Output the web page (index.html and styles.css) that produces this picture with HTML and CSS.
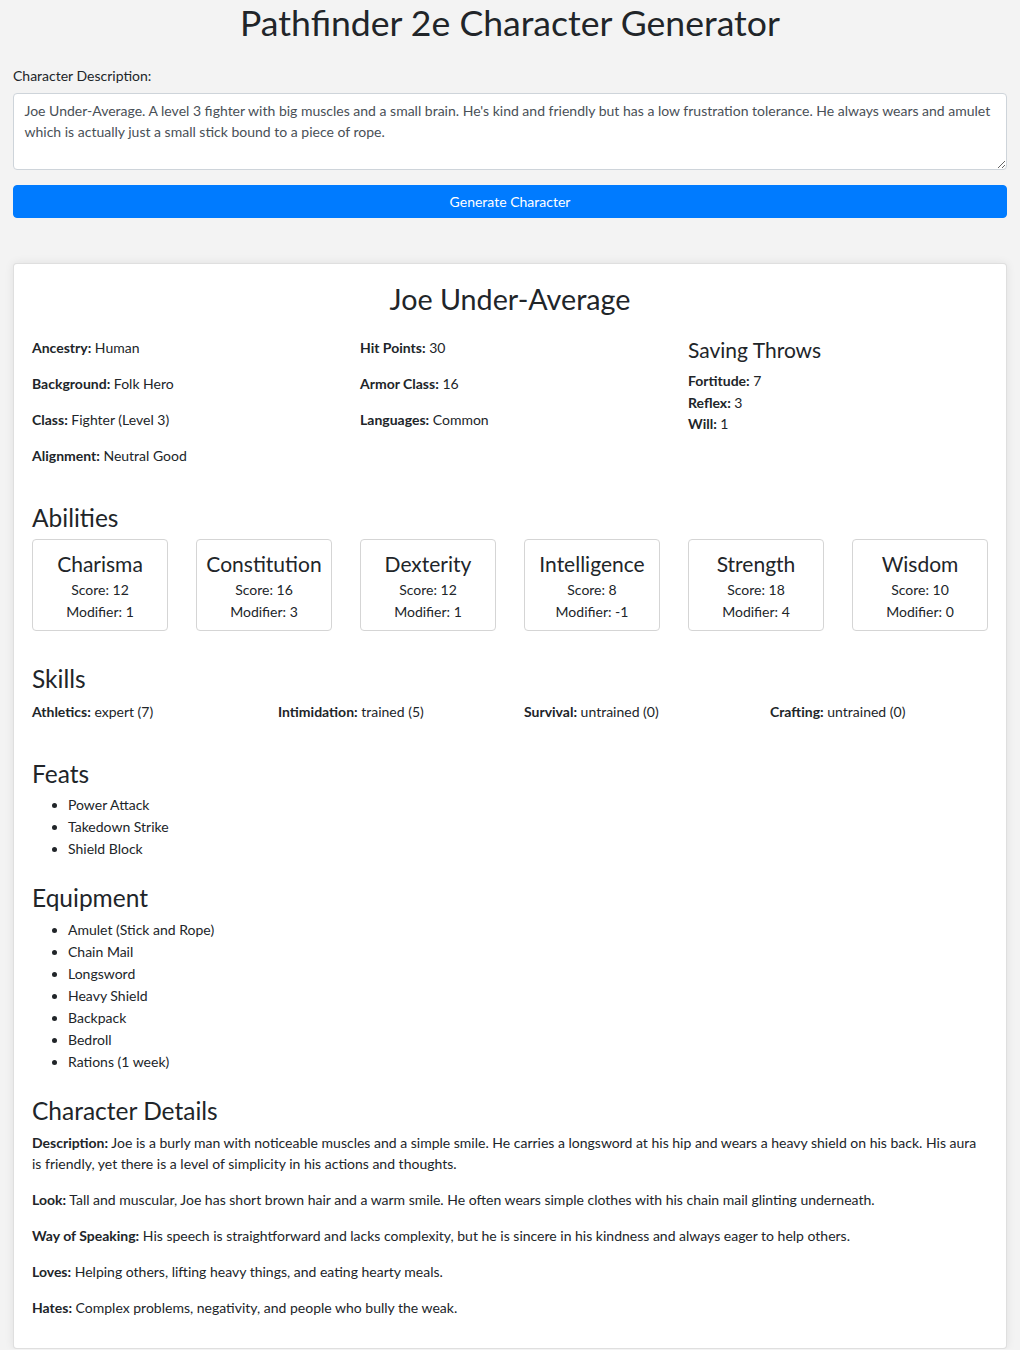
FILE: index.html
```html
<!DOCTYPE html>
<html lang="en">
<head>
<meta charset="utf-8">
<title>Pathfinder 2e Character Generator</title>
<link rel="stylesheet" href="styles.css">
</head>
<body>
<div class="container">
  <h1 class="page-title">Pathfinder 2e Character Generator</h1>
  <form class="gen-form">
    <label class="form-label" for="desc">Character Description:</label>
    <textarea id="desc" class="form-control">Joe Under-Average. A level 3 fighter with big muscles and a small brain. He's kind and friendly but has a low frustration tolerance. He always wears and amulet which is actually just a small stick bound to a piece of rope.</textarea>
    <button type="button" class="btn-primary">Generate Character</button>
  </form>

  <div class="card">
    <h2 class="char-name">Joe Under-Average</h2>

    <div class="info-grid">
      <div class="info-col">
        <p><strong>Ancestry:</strong> Human</p>
        <p><strong>Background:</strong> Folk Hero</p>
        <p><strong>Class:</strong> Fighter (Level 3)</p>
        <p><strong>Alignment:</strong> Neutral Good</p>
      </div>
      <div class="info-col">
        <p><strong>Hit Points:</strong> 30</p>
        <p><strong>Armor Class:</strong> 16</p>
        <p><strong>Languages:</strong> Common</p>
      </div>
      <div class="info-col">
        <h4 class="sub-title">Saving Throws</h4>
        <div class="saves">
          <div><strong>Fortitude:</strong> 7</div>
          <div><strong>Reflex:</strong> 3</div>
          <div><strong>Will:</strong> 1</div>
        </div>
      </div>
    </div>

    <section class="sec sec-abilities">
      <h3 class="sec-title">Abilities</h3>
      <div class="abilities">
        <div class="ability"><h4 class="ability-name">Charisma</h4><div>Score: 12</div><div>Modifier: 1</div></div>
        <div class="ability"><h4 class="ability-name">Constitution</h4><div>Score: 16</div><div>Modifier: 3</div></div>
        <div class="ability"><h4 class="ability-name">Dexterity</h4><div>Score: 12</div><div>Modifier: 1</div></div>
        <div class="ability"><h4 class="ability-name">Intelligence</h4><div>Score: 8</div><div>Modifier: -1</div></div>
        <div class="ability"><h4 class="ability-name">Strength</h4><div>Score: 18</div><div>Modifier: 4</div></div>
        <div class="ability"><h4 class="ability-name">Wisdom</h4><div>Score: 10</div><div>Modifier: 0</div></div>
      </div>
    </section>

    <section class="sec sec-skills">
      <h3 class="sec-title">Skills</h3>
      <div class="skills">
        <div><strong>Athletics:</strong> expert (7)</div>
        <div><strong>Intimidation:</strong> trained (5)</div>
        <div><strong>Survival:</strong> untrained (0)</div>
        <div><strong>Crafting:</strong> untrained (0)</div>
      </div>
    </section>

    <section class="sec sec-feats">
      <h3 class="sec-title">Feats</h3>
      <ul class="list">
        <li>Power Attack</li>
        <li>Takedown Strike</li>
        <li>Shield Block</li>
      </ul>
    </section>

    <section class="sec sec-equip">
      <h3 class="sec-title">Equipment</h3>
      <ul class="list">
        <li>Amulet (Stick and Rope)</li>
        <li>Chain Mail</li>
        <li>Longsword</li>
        <li>Heavy Shield</li>
        <li>Backpack</li>
        <li>Bedroll</li>
        <li>Rations (1 week)</li>
      </ul>
    </section>

    <section class="sec sec-details">
      <h3 class="sec-title">Character Details</h3>
      <div class="details">
        <p><strong>Description:</strong> Joe is a burly man with noticeable muscles and a simple smile. He carries a longsword at his hip and wears a heavy shield on his back. His aura is friendly, yet there is a level of simplicity in his actions and thoughts.</p>
        <p><strong>Look:</strong> Tall and muscular, Joe has short brown hair and a warm smile. He often wears simple clothes with his chain mail glinting underneath.</p>
        <p><strong>Way of Speaking:</strong> His speech is straightforward and lacks complexity, but he is sincere in his kindness and always eager to help others.</p>
        <p><strong>Loves:</strong> Helping others, lifting heavy things, and eating hearty meals.</p>
        <p><strong>Hates:</strong> Complex problems, negativity, and people who bully the weak.</p>
      </div>
    </section>
  </div>
</div>
</body>
</html>
```

FILE: styles.css
```css
* { box-sizing: border-box; }

html, body {
  margin: 0;
  padding: 0;
}

body {
  background: #f3f3f3;
  color: #212529;
  font-family: Lato, "Noto Sans", "DejaVu Sans", sans-serif;
  font-size: 14px;
  line-height: 21px;
}

.container {
  padding: 0 13px;
}

.page-title {
  margin: 0;
  padding-top: 2px;
  font-size: 35.6px;
  line-height: 42px;
  font-weight: 400;
  text-align: center;
}

.gen-form {
  display: flex;
  flex-direction: column;
  margin-top: 21px;
}

.form-label {
  display: block;
  margin-bottom: 7px;
}

.form-control {
  display: block;
  width: 100%;
  height: 77px;
  padding: 6px 10.5px 5px;
  font-family: inherit;
  font-size: 14px;
  line-height: 21px;
  color: #495057;
  background: #fff;
  border: 1px solid #ced4da;
  border-radius: 4px;
  resize: vertical;
}

.btn-primary {
  display: block;
  width: 100%;
  height: 33px;
  margin-top: 15px;
  padding: 0 10px;
  font-family: inherit;
  font-size: 14px;
  color: #fff;
  background: #007bff;
  border: 1px solid #007bff;
  border-radius: 4px;
}

.card {
  display: flex;
  flex-direction: column;
  margin-top: 45px;
  padding: 18px 18px 30px;
  background: #fff;
  border: 1px solid rgba(0, 0, 0, 0.125);
  border-radius: 4px;
  box-shadow: 0 0 10px rgba(0, 0, 0, 0.08);
}

.char-name {
  margin: 1px 0 0;
  font-size: 28.7px;
  line-height: 33.6px;
  font-weight: 400;
  text-align: center;
}

.info-grid {
  display: grid;
  grid-template-columns: repeat(3, 1fr);
  column-gap: 28px;
  margin-top: 20.7px;
}

.info-col p {
  margin: 0 0 15px;
}

.info-col p:last-child {
  margin-bottom: 0;
}

.sub-title {
  margin: 0 0 8px;
  font-size: 21px;
  line-height: 25.2px;
  font-weight: 400;
}

.saves div {
  line-height: 21.5px;
}

strong {
  font-weight: 700;
}

.sec-title {
  margin: 0;
  font-size: 24.5px;
  line-height: 29.4px;
  font-weight: 400;
}

.sec-abilities { margin-top: 36.8px; }
.sec-skills { margin-top: 33px; }
.sec-feats { margin-top: 37px; }
.sec-equip { margin-top: 23.3px; }
.sec-details { margin-top: 23.3px; }

.abilities {
  display: grid;
  grid-template-columns: repeat(6, 1fr);
  column-gap: 28px;
  margin-top: 6.5px;
}

.ability {
  padding: 11px 6px 8px;
  border: 1px solid #d5d5d5;
  border-radius: 4px;
  text-align: center;
}

.ability div {
  line-height: 21.5px;
}

.ability-name {
  margin: 0 0 3px;
  font-size: 21px;
  line-height: 25.2px;
  font-weight: 400;
}

.skills {
  display: grid;
  grid-template-columns: repeat(4, 1fr);
  column-gap: 28px;
  margin-top: 7px;
}

.list {
  margin: 6px 0 0;
  padding-left: 36px;
}

.list li {
  line-height: 22px;
}

.details {
  margin-top: 7px;
}

.details p {
  margin: 0 0 15px;
}

.details p:last-child {
  margin-bottom: 0;
}
```
